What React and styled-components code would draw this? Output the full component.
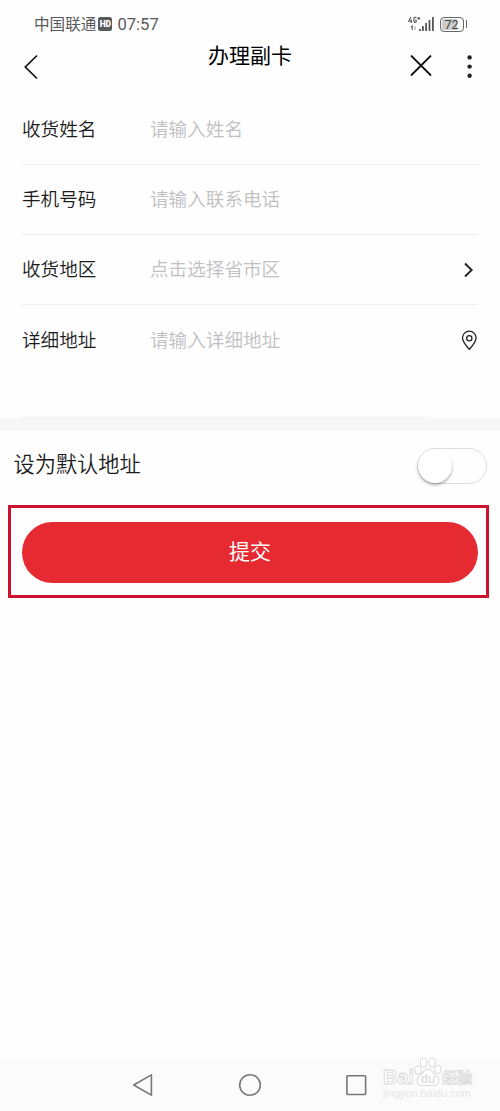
import React, { useState } from "react";
import styled, { createGlobalStyle } from "styled-components";

const fields = [
  { label: "收货姓名", placeholder: "请输入姓名" },
  { label: "手机号码", placeholder: "请输入联系电话" },
  { label: "收货地区", placeholder: "点击选择省市区", icon: "arrow" },
  { label: "详细地址", placeholder: "请输入详细地址", icon: "pin" },
];

function SignalIcon() {
  return (
    <svg width="27" height="17" viewBox="0 0 27 17">
      <g fill="none" stroke="#555" strokeWidth="1.1">
        <path d="M2.8 1L.7 5.3H4.1M3.3 3.6V7M8.2 2.2C7.9 .8 5.9 .8 5.9 2.6V5C5.9 6.8 8.3 6.8 8.3 5V4.2H7.1M9.4 2.4H12.2M10.8 1V3.8" />
        <path d="M3 11.3L4.2 10.1V14" />
        <path d="M7 10V14" stroke="#aaa" />
      </g>
      <g fill="#555">
        <rect x="11" y="13" width="1.8" height="2" />
        <rect x="14" y="10" width="1.8" height="5" />
        <rect x="17.2" y="7" width="1.8" height="8" />
        <rect x="20.6" y="4" width="1.8" height="11" />
        <rect x="24" y="1" width="1.8" height="14" />
      </g>
    </svg>
  );
}

function BackIcon() {
  return (
    <svg width="16" height="26" viewBox="0 0 16 26">
      <path
        d="M14 1.5L2.3 13L14 24.5"
        fill="none"
        stroke="#111"
        strokeWidth="1.7"
      />
    </svg>
  );
}

function CloseIcon() {
  return (
    <svg width="22" height="22" viewBox="0 0 22 22">
      <path d="M1 .5L21 20.5M21 .5L1 20.5" stroke="#111" strokeWidth="1.8" />
    </svg>
  );
}

function MoreIcon() {
  return (
    <svg width="6" height="24" viewBox="0 0 6 24" fill="#222">
      <circle cx="2.6" cy="3.4" r="2.2" />
      <circle cx="2.6" cy="12.6" r="2.2" />
      <circle cx="2.6" cy="21.8" r="2.2" />
    </svg>
  );
}

function ArrowIcon() {
  return (
    <svg width="15" height="16" viewBox="0 0 15 16">
      <path
        d="M2 1.5L8.7 8L2 14.5"
        fill="none"
        stroke="#222"
        strokeWidth="1.9"
      />
    </svg>
  );
}

function PinIcon() {
  return (
    <svg width="17" height="22" viewBox="0 0 17 22">
      <path
        d="M8.3 19.3C5.4 15.9 1.5 11.7 1.5 7.9A6.8 6.8 0 0 1 15.1 7.9C15.1 11.7 11.2 15.9 8.3 19.3Z"
        fill="none"
        stroke="#222"
        strokeWidth="1.3"
      />
      <circle cx="8.3" cy="8.3" r="2.6" fill="none" stroke="#222" strokeWidth="1.3" />
    </svg>
  );
}

function PawIcon() {
  return (
    <svg width="28" height="30" viewBox="0 0 28 30">
      <g fill="#fff" stroke="#dcdcdc" strokeWidth="1.1">
        <ellipse cx="4" cy="13" rx="3.1" ry="4" />
        <ellipse cx="9.6" cy="5.5" rx="3.3" ry="4.6" />
        <ellipse cx="18" cy="5.5" rx="3.3" ry="4.6" />
        <ellipse cx="24" cy="12.5" rx="3.1" ry="4" />
        <path d="M14 12C10 12 9 16 6 18.5C1.5 22 3 28.5 8 28.5H20C25 28.5 26.5 22 22 18.5C19 16 18 12 14 12Z" />
      </g>
      <text
        x="14"
        y="26"
        textAnchor="middle"
        fontFamily="Liberation Sans, sans-serif"
        fontSize="12"
        fontWeight="bold"
        fill="#dedede"
      >
        du
      </text>
    </svg>
  );
}

function App() {
  const [isDefault, setIsDefault] = useState(false);

  return (
    <Screen>
      <GlobalStyle />
      <StatusBar>
        <Carrier>中国联通</Carrier>
        <HdBadge>HD</HdBadge>
        <Time>07:57</Time>
        <StatusRight>
          <SignalIcon />
          <Battery>72</Battery>
          <BatteryTip />
        </StatusRight>
      </StatusBar>

      <Header>
        <HeaderSide>
          <BackIcon />
        </HeaderSide>
        <Title>办理副卡</Title>
        <HeaderSide $end>
          <CloseIcon />
          <MoreIcon />
        </HeaderSide>
      </Header>

      <Form>
        {fields.map((field) => (
          <Field key={field.label}>
            <Label>{field.label}</Label>
            <Placeholder>{field.placeholder}</Placeholder>
            {field.icon === "arrow" && <ArrowIcon />}
            {field.icon === "pin" && <PinIcon />}
          </Field>
        ))}
        <FormEnd />
      </Form>
      <Divider />

      <DefaultRow>
        <DefaultLabel>设为默认地址</DefaultLabel>
        <Toggle
          role="switch"
          aria-checked={isDefault}
          onClick={() => setIsDefault(!isDefault)}
        >
          <Knob $on={isDefault} />
        </Toggle>
      </DefaultRow>

      <Highlight>
        <SubmitButton>提交</SubmitButton>
      </Highlight>

      <NavBar>
        <svg width="22" height="24" viewBox="0 0 22 24">
          <path
            d="M19.4 1.9V22.1L1.7 12Z"
            fill="none"
            stroke="#777"
            strokeWidth="1.6"
            strokeLinejoin="round"
          />
        </svg>
        <svg width="24" height="24" viewBox="0 0 24 24">
          <circle cx="12" cy="12" r="10.3" fill="none" stroke="#777" strokeWidth="1.6" />
        </svg>
        <svg width="22" height="24" viewBox="0 0 22 24">
          <rect x="0.9" y="2.8" width="18.7" height="18.7" rx="0.8" fill="none" stroke="#777" strokeWidth="1.6" />
        </svg>
        <Watermark>
          <Brand>
            <BrandText>Bai</BrandText>
            <PawIcon />
            <BrandText $cjk>经验</BrandText>
          </Brand>
          <Site>jingyan.baidu.com</Site>
        </Watermark>
      </NavBar>
    </Screen>
  );
}

// STYLES FOR COMPONENTS
const GlobalStyle = createGlobalStyle`
  * {
    box-sizing: border-box;
  }

  body {
    margin: 0;
    background: #fefefe;
  }

  svg {
    display: block;
    flex-shrink: 0;
  }
`;

const Screen = styled.div`
  width: 500px;
  height: 1111px;
  display: flex;
  flex-direction: column;
  overflow: hidden;
  background: #fefefe;
  color: #1c1c1c;
  font-family: Roboto, "Noto Sans CJK SC", sans-serif;
`;

const StatusBar = styled.div`
  display: flex;
  align-items: center;
  height: 40px;
  padding: 8px 33px 0 34px;
  color: #595959;
`;

const Carrier = styled.span`
  padding-top: 2px;
  font-size: 15.6px;
  line-height: 24px;
  white-space: nowrap;
`;

const HdBadge = styled.span`
  width: 14px;
  height: 14px;
  margin: 0 5px 0 2px;
  border-radius: 2.5px;
  background: #595959;
  color: #fff;
  font-size: 8.5px;
  font-weight: 900;
  line-height: 14px;
  text-align: center;
`;

const Time = styled.span`
  padding-top: 1px;
  font-size: 16.6px;
  line-height: 24px;
`;

const StatusRight = styled.div`
  display: flex;
  align-items: center;
  margin-left: auto;
`;

const Battery = styled.span`
  width: 24px;
  height: 15px;
  margin-left: 5px;
  border: 1.5px solid #666;
  border-radius: 4px;
  background: linear-gradient(90deg, #ccc 72%, #fefefe 72%);
  box-shadow: inset 0 0 0 1px #fefefe;
  color: #444;
  font-size: 12.5px;
  line-height: 13px;
  text-align: center;
`;

const BatteryTip = styled.span`
  width: 1.5px;
  height: 8px;
  margin-left: 2px;
  background: #666;
`;

const Header = styled.header`
  display: flex;
  align-items: flex-start;
  justify-content: space-between;
  height: 55px;
  padding: 0 27px 0 23px;
`;

const HeaderSide = styled.div`
  display: flex;
  align-items: center;
  justify-content: ${(props) => (props.$end ? "flex-end" : "flex-start")};
  gap: 35px;
  width: 100px;
  height: ${(props) => (props.$end ? "52px" : "53px")};
`;

const Title = styled.h1`
  margin: 1px 0 0 4px;
  color: #000;
  font-size: 21px;
  font-weight: 400;
  line-height: 30px;
`;

const Form = styled.div`
  display: flex;
  flex-direction: column;
  height: 323px;
  padding: 0 22px;
`;

const Field = styled.div`
  display: flex;
  align-items: center;
  height: 70px;
  padding-top: 1px;
  border-bottom: 1px solid #eee;
  font-size: 18.6px;
  font-weight: 350;
  line-height: 28px;

  &:nth-child(4) {
    border-bottom: none;
  }
`;

const Label = styled.span`
  width: 128px;
`;

const Placeholder = styled.span`
  flex: 1;
  color: #c0c0c2;
`;

const FormEnd = styled.div`
  width: 408px;
  height: 1px;
  margin-top: auto;
  background: #f3f3f3;
`;

const Divider = styled.div`
  height: 13px;
  background: #f7f7f7;
`;

const DefaultRow = styled.div`
  display: flex;
  align-items: center;
  justify-content: space-between;
  height: 70px;
  padding: 0 13px 0 13.5px;
`;

const DefaultLabel = styled.span`
  margin-top: -2px;
  font-size: 21.2px;
  font-weight: 350;
  line-height: 30px;
`;

const Toggle = styled.button`
  width: 70px;
  height: 36px;
  padding: 0;
  border: 1px solid #ddd;
  border-radius: 18px;
  background: #fefefe;
`;

const Knob = styled.span`
  display: block;
  width: 34px;
  height: 34px;
  border-radius: 50%;
  background: #fff;
  box-shadow: 0 2px 3px rgba(0, 0, 0, 0.3);
  transform: translateX(${(props) => (props.$on ? "34px" : "0")});
  transition: transform 0.2s;
`;

const Highlight = styled.div`
  display: flex;
  width: 481px;
  height: 93px;
  margin: 4px 0 0 8px;
  padding: 14px 8px 12px 11px;
  border: 3px solid #cd1230;
`;

const SubmitButton = styled.button`
  flex: 1;
  height: 61px;
  padding: 0 0 5px;
  border: none;
  border-radius: 31px;
  background: #e62a31;
  color: #fff;
  font-family: inherit;
  font-size: 21px;
`;

const NavBar = styled.nav`
  position: relative;
  display: flex;
  align-items: center;
  gap: 84px;
  height: 53px;
  margin-top: auto;
  padding: 0 0 0 132px;
  background: #fbfbfb;
`;

// Lies over the right end of the navigation bar
const Watermark = styled.div`
  position: absolute;
  left: 383px;
  top: -2px;
  width: 92px;
`;

const Brand = styled.div`
  display: flex;
  align-items: flex-end;
  height: 31px;
`;

const BrandText = styled.span`
  color: #fff;
  font-family: "Liberation Sans", "Noto Sans CJK SC", sans-serif;
  font-size: ${(props) => (props.$cjk ? "15px" : "20px")};
  font-weight: bold;
  line-height: ${(props) => (props.$cjk ? "18px" : "19px")};
  white-space: nowrap;
  -webkit-text-stroke: 0.8px #d8d8d8;
`;

const Site = styled.div`
  color: #e6e6e6;
  font-family: "Liberation Sans", sans-serif;
  font-size: 10.9px;
  line-height: 13px;
`;

export default App;
